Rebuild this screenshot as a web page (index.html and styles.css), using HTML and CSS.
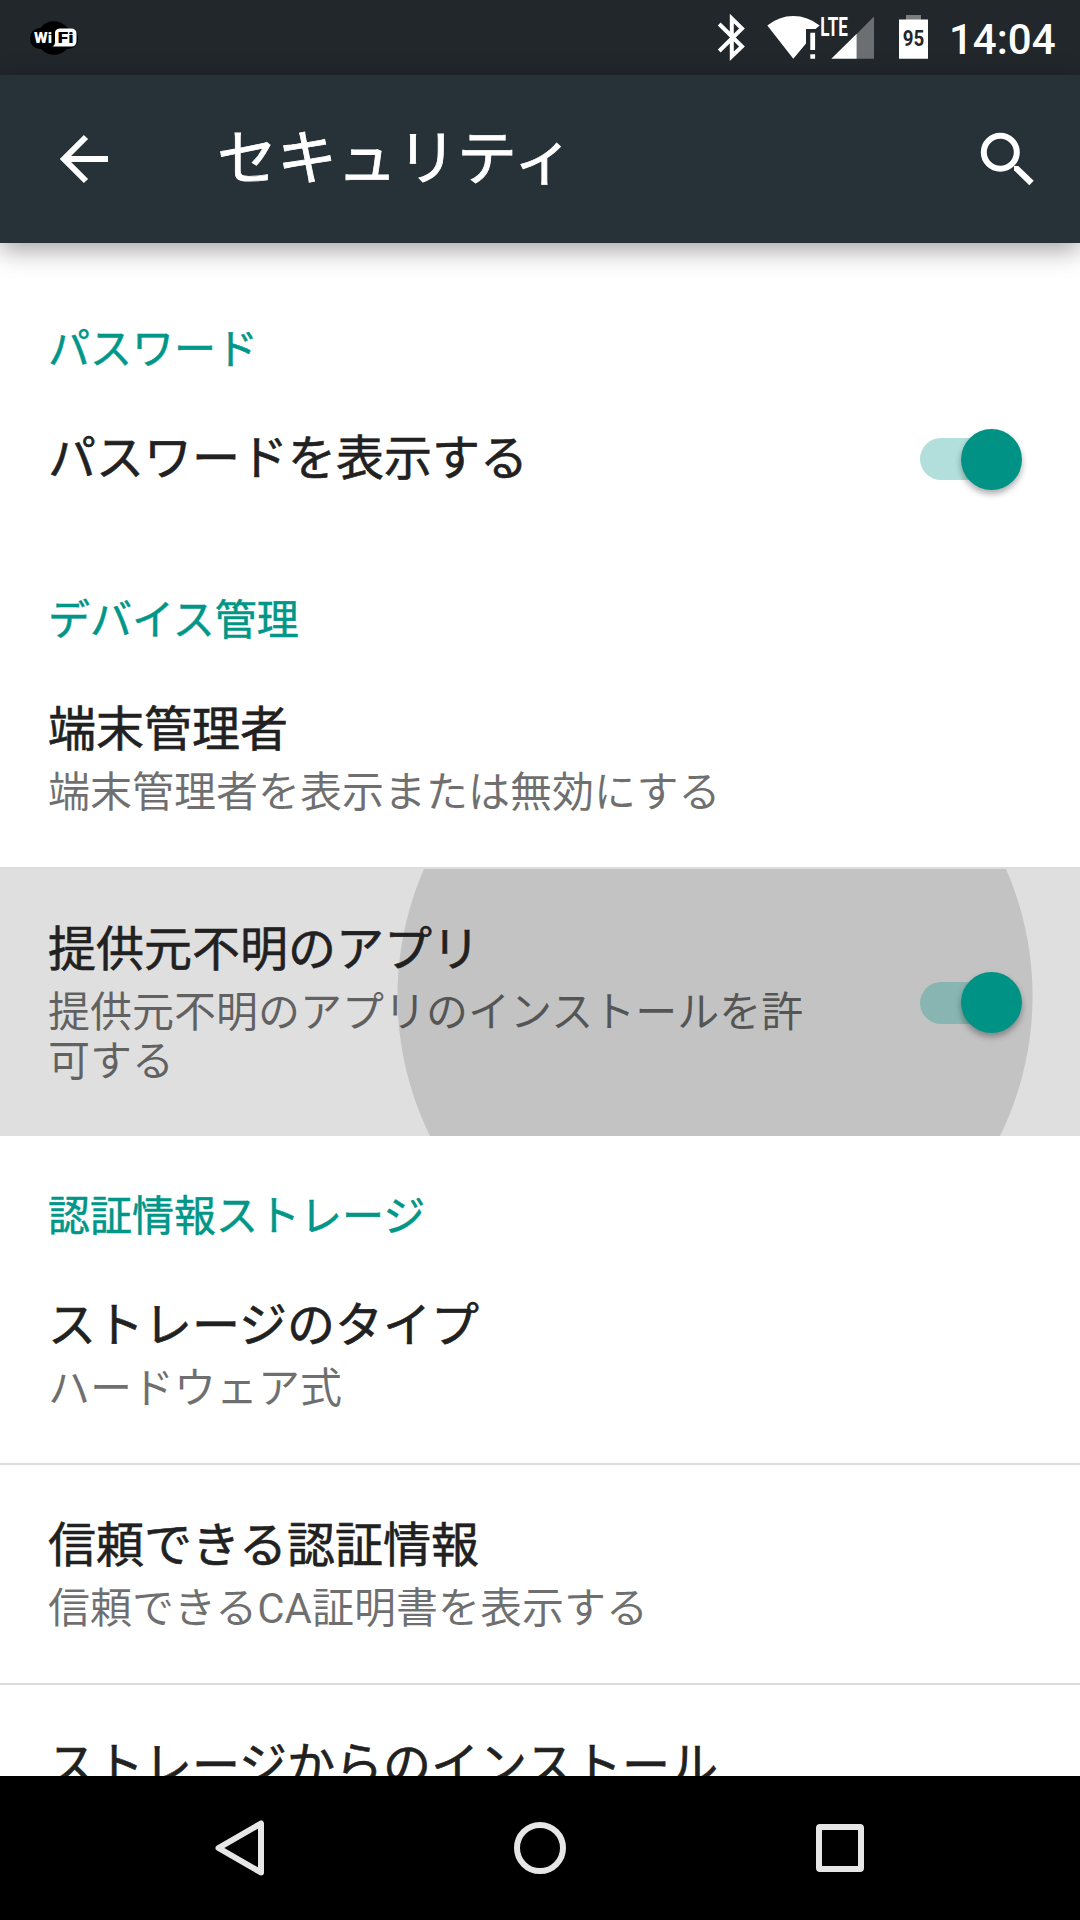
FILE: index.html
```html
<!DOCTYPE html>
<html lang="ja">
<head>
<meta charset="utf-8">
<title>セキュリティ</title>
<link rel="stylesheet" href="styles.css">
</head>
<body>
<div class="screen">
  <header class="status-bar">
    <svg class="status-left" width="52" height="38" viewBox="0 0 52 38">
      <circle cx="26" cy="19" r="16.8"/>
      <rect x="2" y="9" width="48" height="21" rx="10"/>
      <path fill="#fff" d="M27 13q1-3.500 5-3.500h11q5.500 0 5.500 5.500v7q0 5.500-5.500 5.500H24.500q2.500-1 2.500-4z"/>
      <text class="logo-text" x="6" y="24" fill="#fff" textLength="18" lengthAdjust="spacingAndGlyphs">Wi</text>
      <text class="logo-text" x="29.500" y="24" textLength="16" lengthAdjust="spacingAndGlyphs">Fi</text>
    </svg>
    <svg class="status-icons" width="230" height="75" viewBox="710 0 230 75">
      <path fill="none" stroke="#fff" stroke-width="4" d="M719.200 24 742 46.500 731.800 56.300V18.600L742 28.500 719.200 51"/>
      <path fill="#fff" d="M767.300 25.500Q779 16 793.300 16t26.400 9.500L815.500 29H806v14.500L793.300 58.700z"/>
      <path fill="#fff" d="M810.300 32.700h4.800V50h-4.800zM810.300 54.300h4.800v4.500h-4.800z"/>
      <path fill="#6c6f71" d="M874 16.500v42.200h-17.300V34z"/>
      <path fill="#fff" d="M831.300 58.700 856.700 33.800v24.900z"/>
      <text class="lte" x="820.300" y="35.800" textLength="27.500" lengthAdjust="spacingAndGlyphs">LTE</text>
      <path fill="#7b7d7e" d="M906 15h15v6h-15z"/>
      <path fill="#fff" d="M899 19.500h29v39.200h-29z"/>
      <text class="charge" x="902.800" y="45.500" textLength="21.500" lengthAdjust="spacingAndGlyphs">95</text>
    </svg>
    <span class="clock">14:04</span>
  </header>

  <div class="app-bar">
    <svg class="back" width="54" height="54" viewBox="57 132 54 54" fill="none" stroke="#fff" stroke-width="6">
      <path d="M86 137 64 159l22 22M64 159h44"/>
    </svg>
    <h1 class="title">セキュリティ</h1>
    <svg class="search" width="60" height="60" viewBox="978 128 60 60">
      <circle cx="1000.300" cy="151.300" r="16.500" fill="none" stroke="#fff" stroke-width="6"/>
      <path fill="#fff" d="M1014 165h4.300l15.400 14.800-4.400 4.400L1014 169.300z"/>
    </svg>
  </div>

  <main class="list">
    <h2 class="category">パスワード</h2>
    <div class="row row-single">
      <div class="texts"><div class="name">パスワードを表示する</div></div>
      <span class="switch"><span class="thumb"></span></span>
    </div>

    <h2 class="category">デバイス管理</h2>
    <div class="row">
      <div class="texts">
        <div class="name">端末管理者</div>
        <div class="summary">端末管理者を表示または無効にする</div>
      </div>
    </div>
    <div class="divider"></div>
    <div class="row row-pressed">
      <div class="texts">
        <div class="name">提供元不明のアプリ</div>
        <div class="summary">提供元不明のアプリのインストールを許可する</div>
      </div>
      <span class="switch"><span class="thumb"></span></span>
    </div>

    <h2 class="category">認証情報ストレージ</h2>
    <div class="row">
      <div class="texts">
        <div class="name">ストレージのタイプ</div>
        <div class="summary">ハードウェア式</div>
      </div>
    </div>
    <div class="divider"></div>
    <div class="row">
      <div class="texts">
        <div class="name">信頼できる認証情報</div>
        <div class="summary">信頼できるCA証明書を表示する</div>
      </div>
    </div>
    <div class="divider"></div>
    <div class="row row-last">
      <div class="texts"><div class="name">ストレージからのインストール</div></div>
    </div>
  </main>

  <nav class="nav-bar">
    <svg width="60" height="60" viewBox="0 0 60 60"><path d="M8.500 30 51 5.500v49z"/></svg>
    <svg width="60" height="60" viewBox="0 0 60 60"><circle cx="30" cy="30" r="23"/></svg>
    <svg width="60" height="60" viewBox="0 0 60 60"><rect x="9" y="9" width="42" height="42" rx="1"/></svg>
  </nav>
</div>
</body>
</html>
```
FILE: styles.css
```css
* { box-sizing: border-box; }

body {
  margin: 0;
  background: #fff;
  font-family: Roboto, "Noto Sans CJK JP", sans-serif;
}

.screen {
  display: flex;
  flex-direction: column;
  width: 1080px;
  height: 1920px;
  overflow: hidden;
}

.status-bar {
  flex: none;
  display: flex;
  align-items: center;
  height: 75px;
  padding-right: 25px;
  background: #21272b;
}

.status-left { margin-left: 28px; }
.status-icons { margin-left: auto; }
.logo-text { font-size: 15.500px; font-weight: 900; }
.lte { fill: #fff; font-size: 25.500px; font-weight: 700; }
.charge { fill: #21272b; font-size: 21.500px; font-weight: 700; }

.clock {
  width: 106px;
  margin-left: 9px;
  padding-top: 5px;
  color: #fff;
  font-size: 42px;
  font-weight: 500;
  line-height: 50px;
}

.app-bar {
  flex: none;
  display: flex;
  align-items: center;
  height: 168px;
  padding: 0 42px 0 57px;
  background: #263238;
  z-index: 1;
  box-shadow: 0 7px 24px rgba(0, 0, 0, 0.36);
}

.title {
  flex: 1;
  margin: 0 0 0 106px;
  padding-top: 2px;
  color: #fff;
  font-size: 60px;
  font-weight: 400;
  line-height: 80px;
  -webkit-text-stroke: 0.8px #fff;
}

.list {
  flex: 1;
  min-height: 0;
  overflow: hidden;
  padding-top: 26px;
}

.category {
  height: 109px;
  margin: 0;
  padding: 56px 48px 0;
  color: #009688;
  font-size: 42px;
  font-weight: 400;
  line-height: 50px;
  -webkit-text-stroke: 0.5px #009688;
}

.row {
  display: flex;
  align-items: center;
  height: 218px;
  padding: 0 58px 0 48px;
}

.row-single { height: 162px; }

.row-last {
  align-items: flex-start;
  padding-top: 49px;
}

.row-pressed {
  height: 267px;
  background: radial-gradient(circle at 715px 127px, #c3c3c3 317px, #dfdfdf 318px);
}

.texts {
  flex: 1;
  padding-right: 90px;
}

.name {
  color: #212121;
  font-size: 48px;
  line-height: 64px;
  -webkit-text-stroke: 0.6px #212121;
}

.summary {
  color: rgba(0, 0, 0, 0.56);
  font-size: 42px;
  line-height: 49px;
  padding: 6px 0 1px;
}

.divider {
  height: 2px;
  background: #dcdcdc;
}

.switch {
  flex: none;
  display: flex;
  align-items: center;
  justify-content: flex-end;
  width: 102px;
  height: 42px;
  border-radius: 21px;
  background: linear-gradient(90deg, rgba(0, 150, 136, 0.3) 80px, transparent 80px);
}

.thumb {
  width: 61px;
  height: 61px;
  flex: none;
  border-radius: 50%;
  background: #009385;
  box-shadow: 0 4px 6px rgba(0, 0, 0, 0.32);
}

.nav-bar {
  flex: none;
  display: flex;
  justify-content: space-between;
  align-items: center;
  height: 144px;
  padding: 0 210px;
  background: #000;
}

.nav-bar svg {
  fill: none;
  stroke: #e6e6e6;
  stroke-width: 6;
  stroke-linejoin: round;
}
```
